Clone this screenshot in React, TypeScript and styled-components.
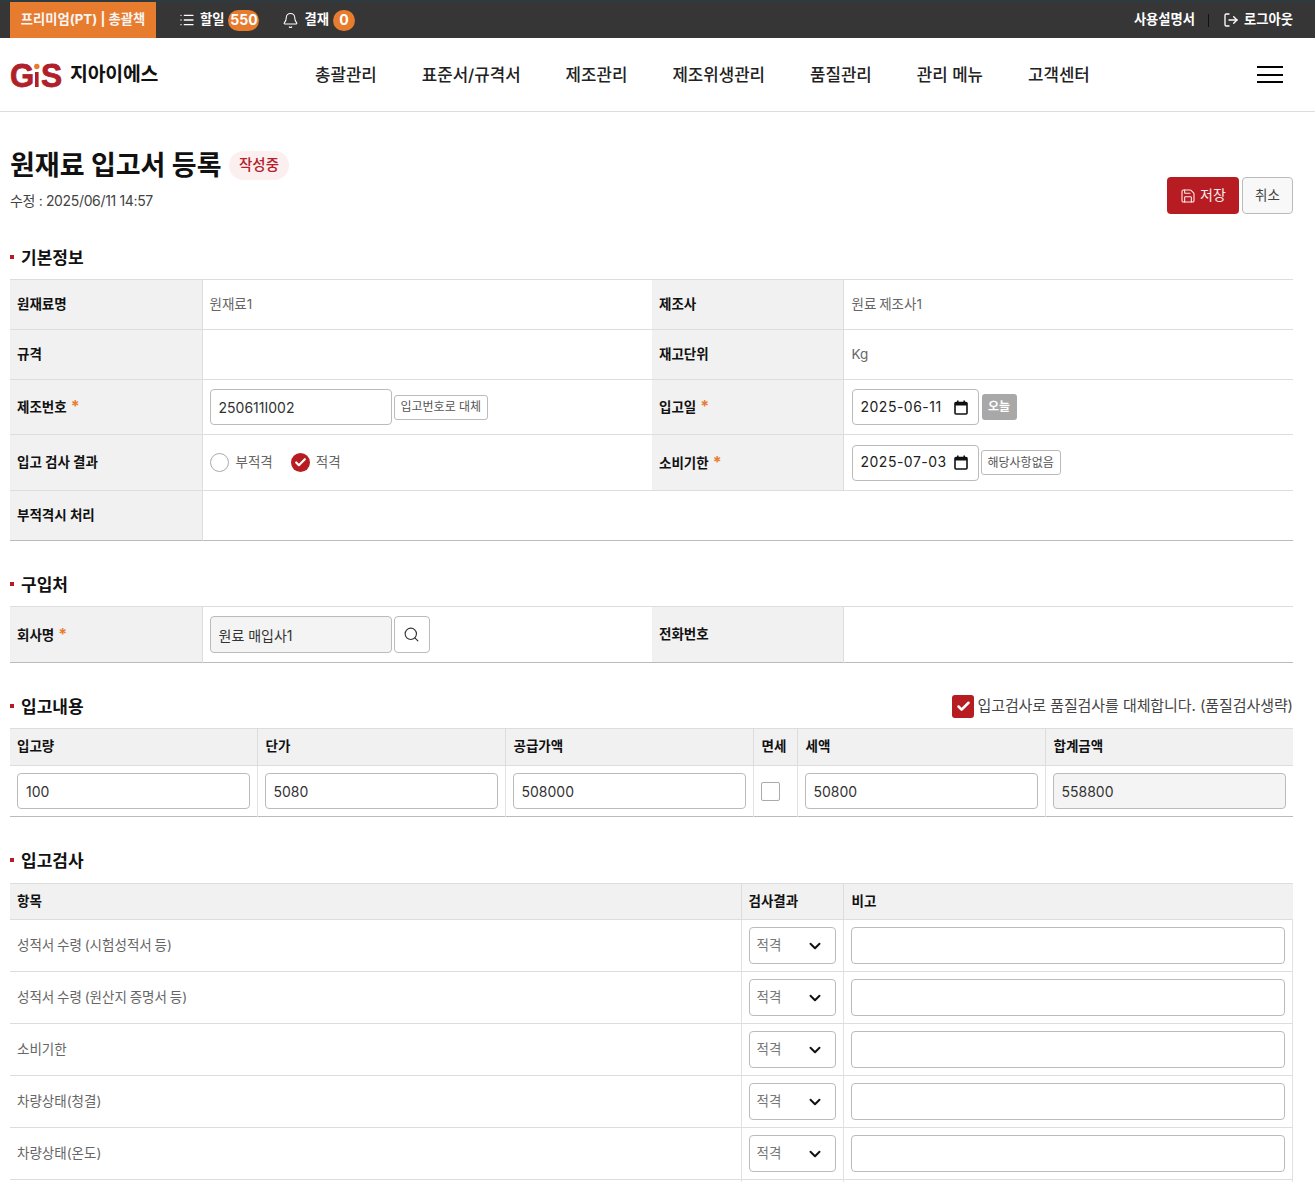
import React from "react";
import styled, { createGlobalStyle } from "styled-components";
import { Bell, Check, ChevronDown, List, LogOut, Save, Search } from "lucide-react";

const Global = createGlobalStyle`
  html, body { margin: 0; padding: 0; background: #fff; }
  body { font-family: Inter, "Noto Sans CJK KR", sans-serif; color: #111; line-height: 1.2; }
  #root { height: 1182px; overflow: hidden; }
  * { box-sizing: border-box; }
`;

const TopBar = styled.div`
  height: 38px;
  background: #363636;
  border-top: 2px solid #2d3a40;
  display: flex;
  align-items: stretch;
  padding: 0 22px 0 10px;
  color: #fff;
  font-size: 13.3px;
  font-weight: 700;
`;
const PlanTab = styled.div`
  width: 146px;
  background: #e87c2e;
  display: flex;
  align-items: center;
  justify-content: center;
  color: #f6f6f6;
`;
const TopItem = styled.div<{ $ml: number }>`
  display: flex;
  align-items: center;
  margin-left: ${(p) => p.$ml}px;
  gap: 5px;
`;
const CountBadge = styled.span<{ $w: number }>`
  width: ${(p) => p.$w}px;
  height: 21px;
  border-radius: 11px;
  background: #e87c2e;
  display: flex;
  align-items: center;
  justify-content: center;
  font-size: 14px;
  font-weight: 700;
  margin-left: -1px;
`;
const TopRight = styled.div`
  margin-left: auto;
  display: flex;
  align-items: center;
`;
const TopDivider = styled.span`
  width: 1px;
  height: 13px;
  background: #111;
  margin: 0 14px 0 13px;
`;

const Header = styled.header`
  height: 74px;
  border-bottom: 1px solid #ddd;
  display: flex;
  align-items: center;
  padding: 0 32px 0 10px;
`;
const Brand = styled.div`
  width: 305px;
  display: flex;
  align-items: center;
  gap: 7px;
  font-size: 19.4px;
  font-weight: 700;
  letter-spacing: -0.2px;
`;
const BrandName = styled.span`
  padding-top: 1px;
`;
const Nav = styled.nav`
  display: flex;
  gap: 45px;
  flex: 1;
  padding-top: 1px;
  font-size: 16.8px;
  font-weight: 500;
  color: #222;
`;
const Burger = styled.div`
  width: 26px;
  display: flex;
  flex-direction: column;
  gap: 5.5px;
  span { height: 2px; background: #000; display: block; }
`;

const Page = styled.main`
  padding: 0 22px 0 10px;
`;
const PageHead = styled.div`
  height: 102px;
  padding-top: 35px;
  display: flex;
  justify-content: space-between;
  align-items: flex-end;
`;
const TitleBlock = styled.div`
  align-self: flex-start;
`;
const TitleRow = styled.div`
  display: flex;
  align-items: center;
  gap: 7.5px;
  height: 36px;
`;
const Title = styled.h1`
  margin: 0;
  padding-top: 2px;
  font-size: 27px;
  font-weight: 700;
`;
const Status = styled.span`
  height: 29px;
  padding: 0 10px;
  border-radius: 15px;
  background: #fbeff0;
  color: #b5202a;
  font-size: 14.5px;
  font-weight: 500;
  display: flex;
  align-items: center;
`;
const Modified = styled.div`
  margin-top: 8px;
  font-size: 14px;
  line-height: 20px;
  color: #444;
  letter-spacing: -0.35px;
`;
const Actions = styled.div`
  display: flex;
  gap: 3px;
`;
const SaveButton = styled.button`
  width: 72px;
  height: 37px;
  background: #b71c22;
  color: #fbeeee;
  border: 0;
  border-radius: 4px;
  font: inherit;
  font-size: 14px;
  display: flex;
  align-items: center;
  justify-content: center;
  gap: 4px;
`;
const CancelButton = styled.button`
  width: 51px;
  height: 37px;
  background: #f8f8f8;
  color: #444;
  border: 1px solid #bbb;
  border-radius: 4px;
  font: inherit;
  font-size: 13.5px;
`;

const SectionHead = styled.div<{ $tall?: boolean }>`
  height: ${(p) => (p.$tall ? 31 : 30)}px;
  padding-bottom: ${(p) => (p.$tall ? 1 : 0)}px;
  margin: 28px 0 7px;
  display: flex;
  align-items: center;
  justify-content: space-between;
`;
const SectionTitle = styled.h2`
  margin: 0;
  font-size: 17px;
  font-weight: 700;
  display: flex;
  align-items: center;
  gap: 7px;
  &::before {
    content: "";
    width: 4px;
    height: 4px;
    background: #b71c22;
  }
`;
const SectionText = styled.span`
  padding-top: 2px;
`;
const ReplaceCheck = styled.label`
  display: flex;
  align-items: center;
  gap: 3px;
  font-size: 15px;
  color: #444;
  letter-spacing: -0.08px;
`;
const CheckedBox = styled.span`
  width: 22px;
  height: 23px;
  border-radius: 3px;
  background: #b71c22;
  color: #fff;
  display: flex;
  align-items: center;
  justify-content: center;
`;

const Table = styled.table`
  width: 1283px;
  table-layout: fixed;
  border-collapse: collapse;
  font-size: 13.5px;
  border-top: 1px solid #ddd;
  tr { border-bottom: 1px solid #ddd; }
  tr:last-child { border-bottom-color: #bbb; }
`;
const Row = styled.tr<{ $h: number }>`
  height: ${(p) => p.$h}px;
`;
const Label = styled.th<{ $inset?: boolean; $raise?: boolean }>`
  background: #f1f1f1;
  border-right: 1px solid #ddd;
  padding: 0 7px ${(p) => (p.$raise ? 2 : 0)}px ${(p) => (p.$inset ? 8 : 7)}px;
  text-align: left;
  font-weight: 700;
  color: #111;
  &:last-child { border-right: 0; }
`;
const Cell = styled.td<{ $line?: boolean; $inset?: boolean }>`
  padding: 0 7px 0 ${(p) => (p.$inset ? 8 : 7)}px;
  color: #666;
  word-spacing: -1px;
  ${(p) => (p.$line ? "border-right: 1px solid #e2e2e2;" : "")}
`;
const Req = styled.span`
  color: #e87c2e;
  margin-left: 4px;
  font-size: 16px;
  line-height: 1;
`;
const Inline = styled.div`
  display: flex;
  align-items: center;
  gap: 2px;
`;
const TextInput = styled.input<{ $w?: number; $grey?: boolean; $h?: number }>`
  width: ${(p) => (p.$w ? `${p.$w}px` : "100%")};
  height: ${(p) => p.$h ?? 36}px;
  display: block;
  border: 1px solid #bbb;
  border-radius: 4px;
  padding: 0 8px;
  font: inherit;
  font-size: 14px;
  word-spacing: normal;
  color: #333;
  background: ${(p) => (p.$grey ? "#f4f4f4" : "#fff")};
  outline: none;
`;
const DateBox = styled.div`
  width: 127px;
  height: 36px;
  border: 1px solid #bbb;
  border-radius: 4px;
  padding: 0 10px 0 8px;
  display: flex;
  align-items: center;
  justify-content: space-between;
  font-size: 14px;
  letter-spacing: 0.5px;
  color: #222;
`;
const SmallButton = styled.button`
  height: 25px;
  padding: 1px 6px 0;
  background: #fff;
  border: 1px solid #bbb;
  border-radius: 3px;
  font: inherit;
  font-size: 12px;
  word-spacing: normal;
  color: #555;
  white-space: nowrap;
`;
const TodayButton = styled.button`
  width: 35px;
  height: 26px;
  margin-left: 1px;
  padding: 1px 0 0;
  background: #a8a8a8;
  border: 0;
  border-radius: 3px;
  font: inherit;
  font-size: 12px;
  font-weight: 700;
  color: #fff;
`;
const IconButton = styled.button`
  width: 36px;
  height: 37px;
  background: #fff;
  border: 1px solid #bbb;
  border-radius: 4px;
  display: flex;
  align-items: center;
  justify-content: center;
  color: #333;
`;
const RadioGroup = styled.div`
  display: flex;
  align-items: center;
  gap: 18px;
`;
const RadioItem = styled.label`
  display: flex;
  align-items: center;
  gap: 7px;
  color: #666;
`;
const RadioOff = styled.span`
  width: 19px;
  height: 19px;
  border-radius: 50%;
  border: 1px solid #aaa;
`;
const RadioOn = styled.span`
  width: 19px;
  height: 19px;
  margin-right: -1px;
  border-radius: 50%;
  background: #b71c22;
  color: #fff;
  display: flex;
  align-items: center;
  justify-content: center;
`;
const EmptyBox = styled.span`
  display: block;
  width: 19px;
  height: 19px;
  border: 1px solid #aaa;
  border-radius: 2px;
`;
const SelectWrap = styled.div`
  position: relative;
  width: 87px;
  height: 37px;
  svg { position: absolute; right: 12px; top: 10px; pointer-events: none; color: #111; }
`;
const Select = styled.select`
  appearance: none;
  width: 100%;
  height: 100%;
  border: 1px solid #bbb;
  border-radius: 4px;
  background: #fff;
  padding: 0 7px;
  font: inherit;
  font-size: 13.5px;
  color: #777;
  outline: none;
`;

const Logo = () => (
  <svg width="53" height="44" viewBox="0 0 53 44" aria-label="GiS">
    <text x="0" y="34" fontFamily="Liberation Sans" fontWeight="700" fontSize="34" fill="#b0202a" stroke="#b0202a" strokeWidth="0.8" textLength="24" lengthAdjust="spacingAndGlyphs">G</text>
    <rect x="25" y="19" width="3.6" height="15" fill="#b0202a" />
    <circle cx="26.8" cy="13.5" r="2.7" fill="#e87c2e" />
    <text x="31" y="34" fontFamily="Liberation Sans" fontWeight="700" fontSize="34" fill="#b0202a" stroke="#b0202a" strokeWidth="0.8" textLength="21" lengthAdjust="spacingAndGlyphs">S</text>
  </svg>
);

const CalendarIcon = () => (
  <svg width="14" height="15" viewBox="0 0 14 15">
    <rect x="1" y="2.5" width="12" height="11.5" rx="1" fill="none" stroke="#111" strokeWidth="1.6" />
    <rect x="1" y="2.5" width="12" height="3" fill="#111" />
    <rect x="3" y="0.5" width="1.6" height="3" fill="#111" />
    <rect x="9.4" y="0.5" width="1.6" height="3" fill="#111" />
  </svg>
);

const inspectionItems = [
  "성적서 수령 (시험성적서 등)",
  "성적서 수령 (원산지 증명서 등)",
  "소비기한",
  "차량상태(청결)",
  "차량상태(온도)",
];
const navItems = ["총괄관리", "표준서/규격서", "제조관리", "제조위생관리", "품질관리", "관리 메뉴", "고객센터"];
const amounts = [
  { label: "입고량", value: "100" },
  { label: "단가", value: "5080" },
  { label: "공급가액", value: "508000" },
];

const InfoCols = () => (
  <colgroup>
    <col style={{ width: 192 }} />
    <col style={{ width: 450 }} />
    <col style={{ width: 191 }} />
    <col style={{ width: 450 }} />
  </colgroup>
);

export default function App() {
  return (
    <>
      <Global />
      <TopBar>
        <PlanTab>프리미엄(PT) | 총괄책</PlanTab>
        <TopItem $ml={23}>
          <List size={16} strokeWidth={2} />
          할일
          <CountBadge $w={31}>550</CountBadge>
        </TopItem>
        <TopItem $ml={23}>
          <Bell size={17} strokeWidth={1.5} />
          결재
          <CountBadge $w={22}>0</CountBadge>
        </TopItem>
        <TopRight>
          사용설명서
          <TopDivider />
          <TopItem $ml={0}>
            <LogOut size={16} strokeWidth={2} style={{ transform: "scaleX(-1) rotate(180deg)" }} />
            로그아웃
          </TopItem>
        </TopRight>
      </TopBar>
      <Header>
        <Brand>
          <Logo />
          <BrandName>지아이에스</BrandName>
        </Brand>
        <Nav>
          {navItems.map((n) => (
            <span key={n}>{n}</span>
          ))}
        </Nav>
        <Burger>
          <span />
          <span />
          <span />
        </Burger>
      </Header>
      <Page>
        <PageHead>
          <TitleBlock>
            <TitleRow>
              <Title>원재료 입고서 등록</Title>
              <Status>작성중</Status>
            </TitleRow>
            <Modified>수정 : 2025/06/11 14:57</Modified>
          </TitleBlock>
          <Actions>
            <SaveButton>
              <Save size={16} strokeWidth={1.6} />
              저장
            </SaveButton>
            <CancelButton>취소</CancelButton>
          </Actions>
        </PageHead>

        <SectionHead>
          <SectionTitle><SectionText>기본정보</SectionText></SectionTitle>
        </SectionHead>
        <Table>
          <InfoCols />
          <tbody>
            <Row $h={50}>
              <Label>원재료명</Label>
              <Cell>원재료1</Cell>
              <Label>제조사</Label>
              <Cell $inset>원료 제조사1</Cell>
            </Row>
            <Row $h={50}>
              <Label>규격</Label>
              <Cell />
              <Label>재고단위</Label>
              <Cell $inset>Kg</Cell>
            </Row>
            <Row $h={55}>
              <Label>제조번호<Req>*</Req></Label>
              <Cell>
                <Inline>
                  <TextInput $w={182} defaultValue="250611I002" />
                  <SmallButton>입고번호로 대체</SmallButton>
                </Inline>
              </Cell>
              <Label>입고일<Req>*</Req></Label>
              <Cell $inset>
                <Inline>
                  <DateBox>2025-06-11<CalendarIcon /></DateBox>
                  <TodayButton>오늘</TodayButton>
                </Inline>
              </Cell>
            </Row>
            <Row $h={56}>
              <Label>입고 검사 결과</Label>
              <Cell>
                <RadioGroup>
                  <RadioItem><RadioOff />부적격</RadioItem>
                  <RadioItem>
                    <RadioOn><Check size={13} strokeWidth={4} /></RadioOn>
                    적격
                  </RadioItem>
                </RadioGroup>
              </Cell>
              <Label>소비기한<Req>*</Req></Label>
              <Cell $inset>
                <Inline>
                  <DateBox>2025-07-03<CalendarIcon /></DateBox>
                  <SmallButton>해당사항없음</SmallButton>
                </Inline>
              </Cell>
            </Row>
            <Row $h={50}>
              <Label>부적격시 처리</Label>
              <Cell colSpan={3} />
            </Row>
          </tbody>
        </Table>

        <SectionHead>
          <SectionTitle><SectionText>구입처</SectionText></SectionTitle>
        </SectionHead>
        <Table>
          <InfoCols />
          <tbody>
            <Row $h={56}>
              <Label>회사명<Req>*</Req></Label>
              <Cell>
                <Inline>
                  <TextInput $w={182} $h={37} $grey defaultValue="원료 매입사1" />
                  <IconButton><Search size={17} strokeWidth={1.6} /></IconButton>
                </Inline>
              </Cell>
              <Label>전화번호</Label>
              <Cell />
            </Row>
          </tbody>
        </Table>

        <SectionHead>
          <SectionTitle><SectionText>입고내용</SectionText></SectionTitle>
          <ReplaceCheck>
            <CheckedBox><Check size={15} strokeWidth={4} /></CheckedBox>
            입고검사로 품질검사를 대체합니다. (품질검사생략)
          </ReplaceCheck>
        </SectionHead>
        <Table>
          <colgroup>
            <col style={{ width: 247 }} />
            <col style={{ width: 248 }} />
            <col style={{ width: 248 }} />
            <col style={{ width: 44 }} />
            <col style={{ width: 248 }} />
            <col style={{ width: 248 }} />
          </colgroup>
          <tbody>
            <Row $h={37}>
              {amounts.map((a, i) => (
                <Label key={a.label} $inset={i > 0} $raise>{a.label}</Label>
              ))}
              <Label $inset $raise>면세</Label>
              <Label $inset $raise>세액</Label>
              <Label $inset $raise>합계금액</Label>
            </Row>
            <Row $h={51}>
              {amounts.map((a) => (
                <Cell key={a.label} $line>
                  <TextInput defaultValue={a.value} />
                </Cell>
              ))}
              <Cell $line><EmptyBox /></Cell>
              <Cell $line><TextInput defaultValue="50800" /></Cell>
              <Cell><TextInput $grey defaultValue="558800" /></Cell>
            </Row>
          </tbody>
        </Table>

        <SectionHead $tall>
          <SectionTitle><SectionText>입고검사</SectionText></SectionTitle>
        </SectionHead>
        <Table>
          <colgroup>
            <col style={{ width: 731 }} />
            <col style={{ width: 102 }} />
            <col />
          </colgroup>
          <tbody>
            <Row $h={36}>
              <Label>항목</Label>
              <Label>검사결과</Label>
              <Label $inset>비고</Label>
            </Row>
            {inspectionItems.map((item) => (
              <Row $h={52} key={item}>
                <Cell $line>{item}</Cell>
                <Cell $line>
                  <SelectWrap>
                    <Select defaultValue="적격">
                      <option>적격</option>
                      <option>부적격</option>
                    </Select>
                    <ChevronDown size={18} strokeWidth={2.6} />
                  </SelectWrap>
                </Cell>
                <Cell $line><TextInput $h={37} /></Cell>
              </Row>
            ))}
            <Row $h={52}>
              <Cell $line />
              <Cell $line />
              <Cell $line />
            </Row>
          </tbody>
        </Table>
      </Page>
    </>
  );
}
